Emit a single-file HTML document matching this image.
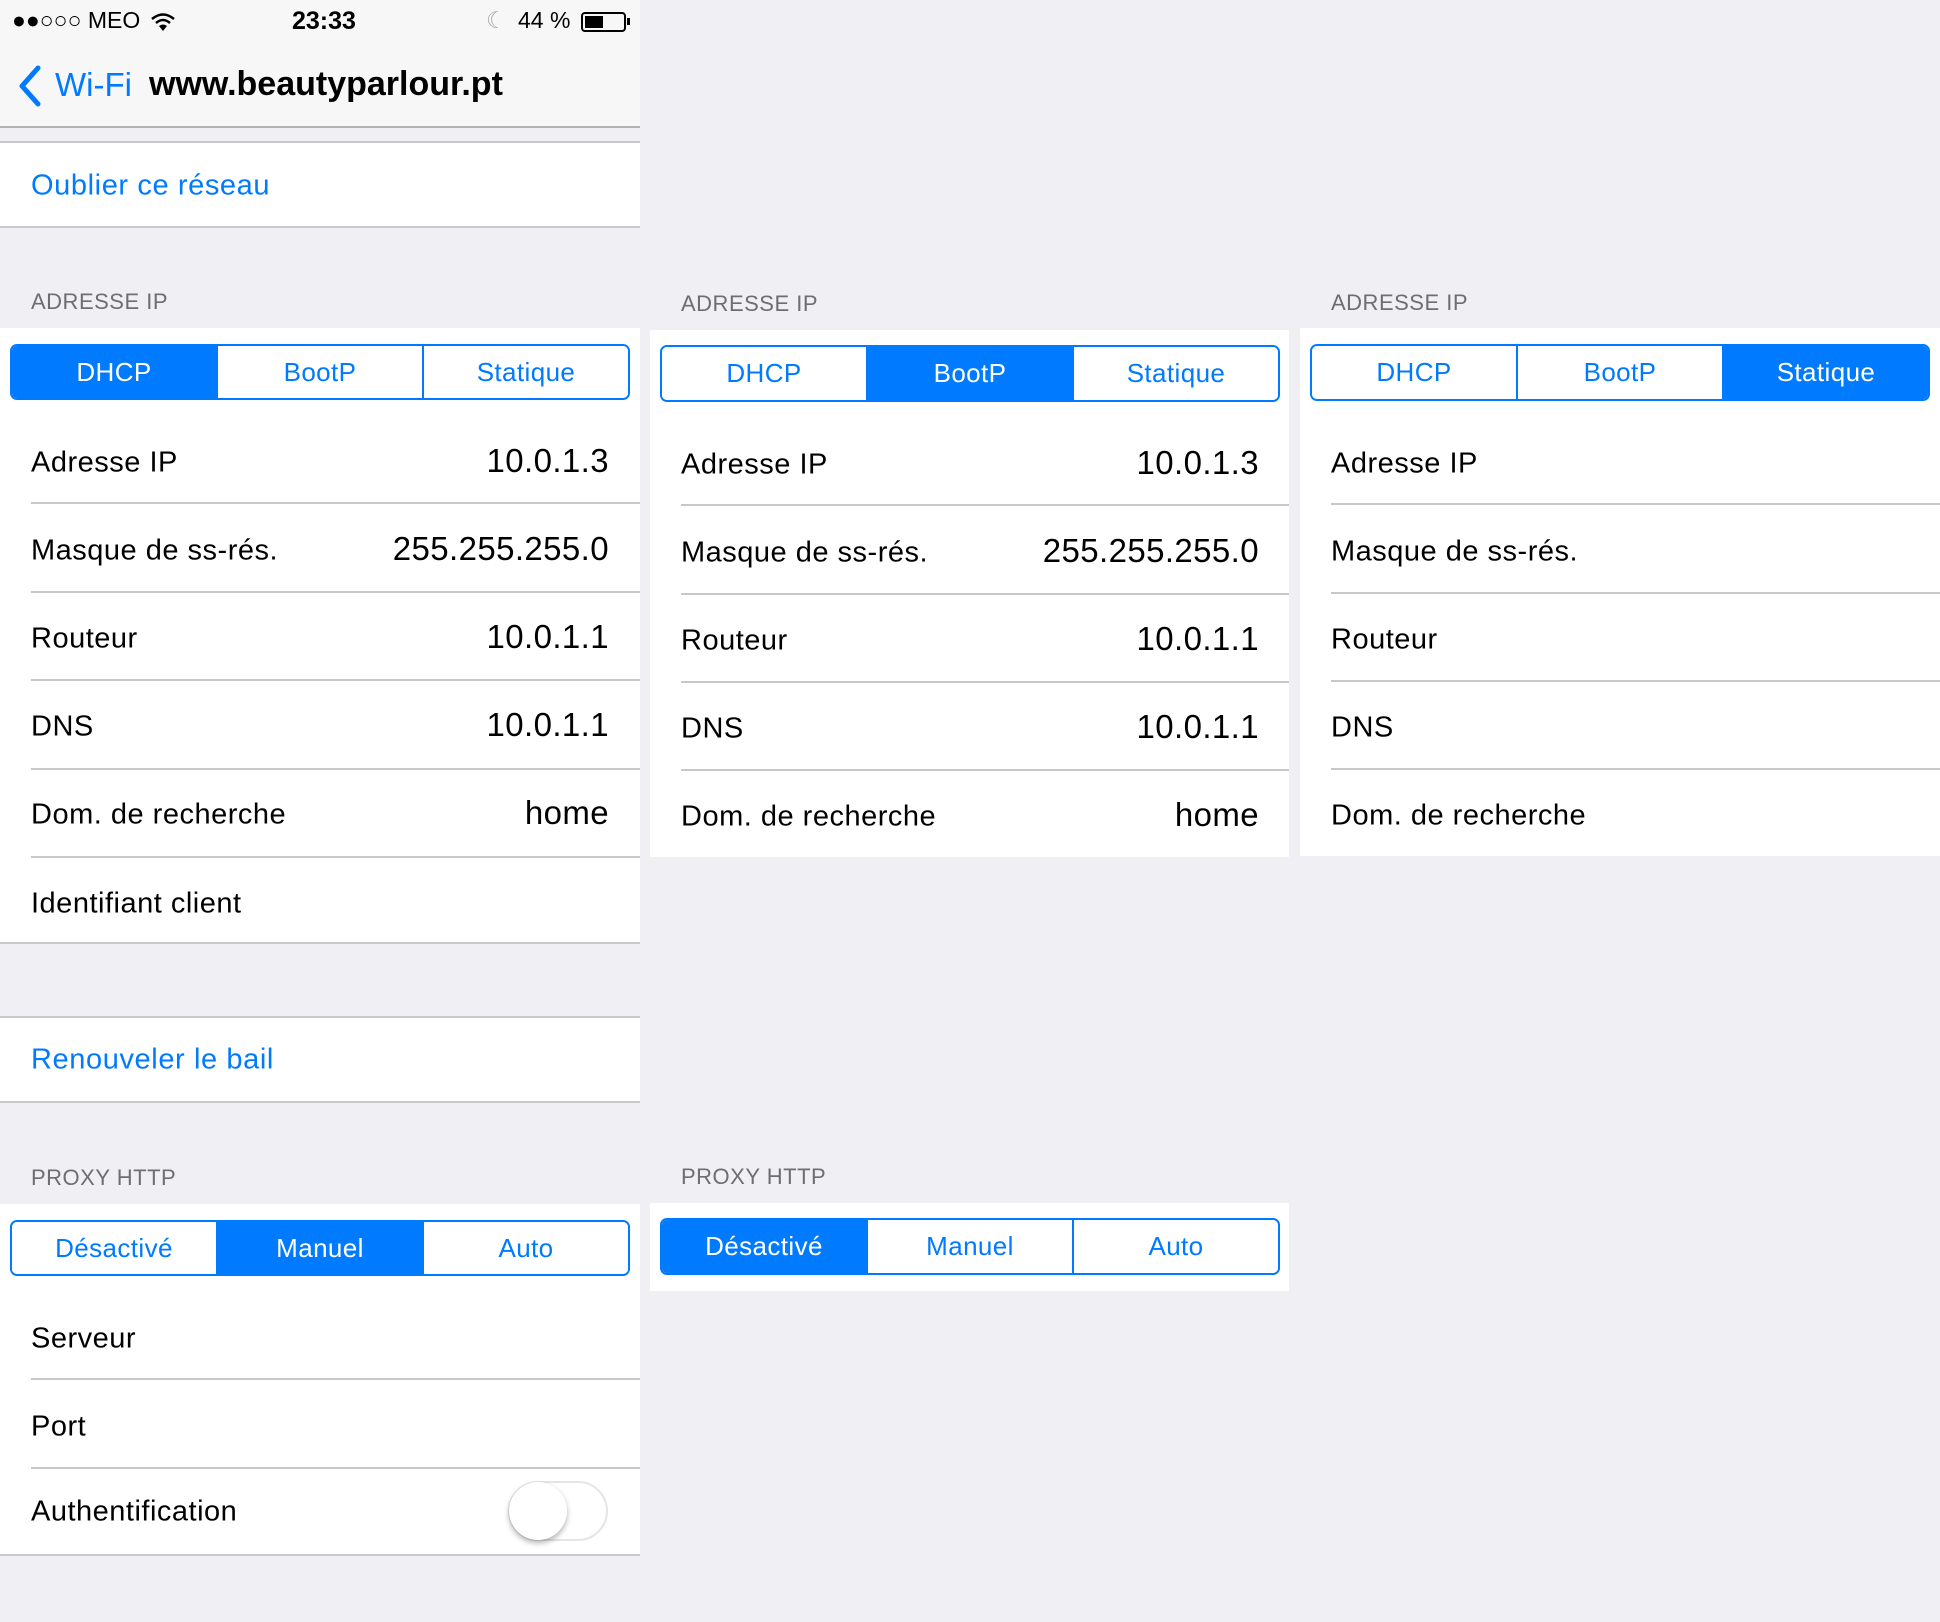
<!DOCTYPE html>
<html><head><meta charset="utf-8"><style>
*{margin:0;padding:0;box-sizing:border-box}
body{width:1940px;height:1622px;background:#efeff4;font-family:"Liberation Sans",sans-serif;position:relative;overflow:hidden}
.a{position:absolute}
.white{position:absolute;background:#fff}
.hdr{position:absolute;font-size:22px;color:#6d6d72;letter-spacing:0.5px}
.lbl{position:absolute;font-size:29px;letter-spacing:0.5px;color:#000;transform:translateY(-50%)}
.val{position:absolute;font-size:33px;letter-spacing:0.4px;color:#000;transform:translateY(-50%);text-align:right}
.sep{position:absolute;height:2px;background:#c8c7cc}
.seg{position:absolute;display:flex;border:2px solid #007aff;border-radius:7px;overflow:hidden}
.seg div{flex:1;display:flex;align-items:center;justify-content:center;font-size:26px;letter-spacing:0.4px;color:#007aff;border-left:2px solid #007aff;background:#fff}
.seg div:first-child{border-left:none}
.seg div.on{background:#007aff;color:#fff}
.link{position:absolute;font-size:29px;letter-spacing:0.6px;color:#007aff;transform:translateY(-50%)}
</style></head><body>
<!-- header -->
<div class="a" style="left:0;top:0;width:640px;height:127px;background:#f7f7f7"></div>
<div class="sep" style="left:0;top:126px;width:640px;background:#b2b2b2"></div>
<div class="a" style="left:12px;top:7px;font-size:23px">●●○○○ MEO</div>
<svg class="a" style="left:150px;top:12px" width="26" height="20" viewBox="0 0 26 20"><path d="M2 7 Q13 -2 24 7 M6 11 Q13 5 20 11" stroke="#000" stroke-width="2.5" fill="none"/><path d="M9 14 L13 19 L17 14 Q13 11 9 14Z" fill="#000"/></svg>
<div class="a" style="left:292px;top:7px;font-size:25px;font-weight:bold">23:33</div>
<div class="a" style="left:486px;top:7px;font-size:23px;color:#aaa">☾</div>
<div class="a" style="left:518px;top:7px;font-size:23px">44 %</div>
<div class="a" style="left:581px;top:12px;width:45px;height:20px;border:2px solid #000;border-radius:4px"><div style="position:absolute;left:2px;top:2px;width:18px;height:12px;background:#000"></div></div>
<div class="a" style="left:627px;top:18px;width:3px;height:7px;background:#000"></div>
<svg class="a" style="left:14px;top:64px" width="30" height="44" viewBox="0 0 30 44"><path d="M24 4 L8 22 L24 40" stroke="#007aff" stroke-width="5" fill="none" stroke-linecap="round" stroke-linejoin="round"/></svg>
<div class="a" style="left:55px;top:66px;font-size:33px;color:#007aff">Wi-Fi</div>
<div class="a" style="left:149px;top:65px;font-size:34px;font-weight:bold">www.beautyparlour.pt</div>

<!-- panel 1 -->
<div class="white" style="left:0;top:141px;width:640px;height:87px;border-top:2px solid #c8c7cc;border-bottom:2px solid #c8c7cc"></div>
<div class="link" style="left:31px;top:186px">Oublier ce réseau</div>
<div class="hdr" style="left:31px;top:289px">ADRESSE IP</div>
<div class="white" style="left:0;top:328px;width:640px;height:616px;border-bottom:2px solid #c8c7cc"></div>
<div class="seg" style="left:10px;top:344px;width:620px;height:56px"><div class="on">DHCP</div><div>BootP</div><div>Statique</div></div>
<div class="lbl" style="left:31px;top:463px">Adresse IP</div><div class="val" style="right:1331px;top:461px">10.0.1.3</div>
<div class="sep" style="left:31px;top:502px;width:609px"></div>
<div class="lbl" style="left:31px;top:551px">Masque de ss-rés.</div><div class="val" style="right:1331px;top:549px">255.255.255.0</div>
<div class="sep" style="left:31px;top:591px;width:609px"></div>
<div class="lbl" style="left:31px;top:639px">Routeur</div><div class="val" style="right:1331px;top:637px">10.0.1.1</div>
<div class="sep" style="left:31px;top:679px;width:609px"></div>
<div class="lbl" style="left:31px;top:727px">DNS</div><div class="val" style="right:1331px;top:725px">10.0.1.1</div>
<div class="sep" style="left:31px;top:768px;width:609px"></div>
<div class="lbl" style="left:31px;top:815px">Dom. de recherche</div><div class="val" style="right:1331px;top:813px">home</div>
<div class="sep" style="left:31px;top:856px;width:609px"></div>
<div class="lbl" style="left:31px;top:904px">Identifiant client</div>
<div class="white" style="left:0;top:1016px;width:640px;height:87px;border-top:2px solid #c8c7cc;border-bottom:2px solid #c8c7cc"></div>
<div class="link" style="left:31px;top:1060px">Renouveler le bail</div>
<div class="hdr" style="left:31px;top:1165px">PROXY HTTP</div>
<div class="white" style="left:0;top:1204px;width:640px;height:352px;border-bottom:2px solid #c8c7cc"></div>
<div class="seg" style="left:10px;top:1220px;width:620px;height:56px"><div>Désactivé</div><div class="on">Manuel</div><div>Auto</div></div>
<div class="lbl" style="left:31px;top:1339px">Serveur</div>
<div class="sep" style="left:31px;top:1378px;width:609px"></div>
<div class="lbl" style="left:31px;top:1427px">Port</div>
<div class="sep" style="left:31px;top:1467px;width:609px"></div>
<div class="lbl" style="left:31px;top:1512px">Authentification</div>
<div class="a" style="left:508px;top:1481px;width:100px;height:60px;border:2px solid #e5e5e5;border-radius:30px;background:#fff"></div>
<div class="a" style="left:509px;top:1482px;width:58px;height:58px;border-radius:50%;background:#fff;box-shadow:0 3px 6px rgba(0,0,0,.3)"></div>

<!-- panel 2 -->
<div class="hdr" style="left:681px;top:291px">ADRESSE IP</div>
<div class="white" style="left:650px;top:330px;width:639px;height:527px"></div>
<div class="seg" style="left:660px;top:345px;width:620px;height:57px"><div>DHCP</div><div class="on">BootP</div><div>Statique</div></div>
<div class="lbl" style="left:681px;top:465px">Adresse IP</div><div class="val" style="right:681px;top:463px">10.0.1.3</div>
<div class="sep" style="left:681px;top:504px;width:608px"></div>
<div class="lbl" style="left:681px;top:553px">Masque de ss-rés.</div><div class="val" style="right:681px;top:551px">255.255.255.0</div>
<div class="sep" style="left:681px;top:593px;width:608px"></div>
<div class="lbl" style="left:681px;top:641px">Routeur</div><div class="val" style="right:681px;top:639px">10.0.1.1</div>
<div class="sep" style="left:681px;top:681px;width:608px"></div>
<div class="lbl" style="left:681px;top:729px">DNS</div><div class="val" style="right:681px;top:727px">10.0.1.1</div>
<div class="sep" style="left:681px;top:769px;width:608px"></div>
<div class="lbl" style="left:681px;top:817px">Dom. de recherche</div><div class="val" style="right:681px;top:815px">home</div>
<div class="hdr" style="left:681px;top:1164px">PROXY HTTP</div>
<div class="white" style="left:650px;top:1203px;width:639px;height:88px"></div>
<div class="seg" style="left:660px;top:1218px;width:620px;height:57px"><div class="on">Désactivé</div><div>Manuel</div><div>Auto</div></div>

<!-- panel 3 -->
<div class="hdr" style="left:1331px;top:290px">ADRESSE IP</div>
<div class="white" style="left:1300px;top:328px;width:640px;height:528px"></div>
<div class="seg" style="left:1310px;top:344px;width:620px;height:57px"><div>DHCP</div><div>BootP</div><div class="on">Statique</div></div>
<div class="lbl" style="left:1331px;top:464px">Adresse IP</div>
<div class="sep" style="left:1331px;top:503px;width:609px"></div>
<div class="lbl" style="left:1331px;top:552px">Masque de ss-rés.</div>
<div class="sep" style="left:1331px;top:592px;width:609px"></div>
<div class="lbl" style="left:1331px;top:640px">Routeur</div>
<div class="sep" style="left:1331px;top:680px;width:609px"></div>
<div class="lbl" style="left:1331px;top:728px">DNS</div>
<div class="sep" style="left:1331px;top:768px;width:609px"></div>
<div class="lbl" style="left:1331px;top:816px">Dom. de recherche</div>
</body></html>
